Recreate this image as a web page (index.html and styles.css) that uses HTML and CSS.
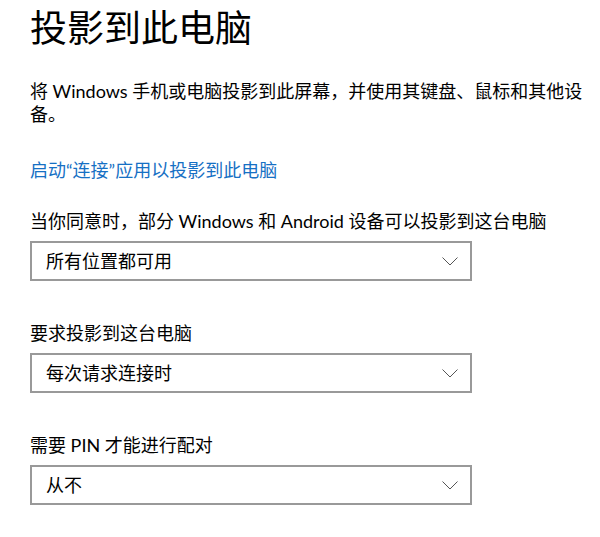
FILE: index.html
```html
<!DOCTYPE html>
<html lang="zh-CN">
<head>
<meta charset="utf-8">
<title>投影到此电脑</title>
<link rel="stylesheet" href="styles.css">
</head>
<body>
<main class="page">
  <h1 class="title">投影到此电脑</h1>
  <p class="desc">将 Windows 手机或电脑投影到此屏幕，并使用其键盘、鼠标和其他设备。</p>
  <a class="link" href="#">启动“连接”应用以投影到此电脑</a>

  <div class="group">
    <div class="label">当你同意时，部分 Windows 和 Android 设备可以投影到这台电脑</div>
    <div class="select">
      <span class="value">所有位置都可用</span>
      <svg class="chev" width="16" height="9" viewBox="0 0 16 9"><polyline points="0.5,0.5 8,8 15.5,0.5" fill="none" stroke="#555" stroke-width="1"/></svg>
    </div>
  </div>

  <div class="group">
    <div class="label">要求投影到这台电脑</div>
    <div class="select">
      <span class="value">每次请求连接时</span>
      <svg class="chev" width="16" height="9" viewBox="0 0 16 9"><polyline points="0.5,0.5 8,8 15.5,0.5" fill="none" stroke="#555" stroke-width="1"/></svg>
    </div>
  </div>

  <div class="group">
    <div class="label">需要 PIN 才能进行配对</div>
    <div class="select">
      <span class="value">从不</span>
      <svg class="chev" width="16" height="9" viewBox="0 0 16 9"><polyline points="0.5,0.5 8,8 15.5,0.5" fill="none" stroke="#555" stroke-width="1"/></svg>
    </div>
  </div>
</main>
</body>
</html>
```

FILE: styles.css
```css
html, body {
  margin: 0;
  padding: 0;
  background: #ffffff;
}

body {
  font-family: "Lato", "Noto Sans CJK SC", sans-serif;
  color: #000000;
  font-size: 18px;
  line-height: 23px;
}

.page {
  display: flex;
  flex-direction: column;
  align-items: flex-start;
  padding: 0 5px 0 30px;
  width: 565px;
}

.title {
  margin: 0;
  font-family: "Noto Sans CJK SC", sans-serif;
  font-size: 37px;
  line-height: 52px;
  font-weight: 400;
  color: #000;
}

.desc {
  margin: 28px 0 0 0;
}

.link {
  margin-top: 33px;
  color: #1670c4;
  text-decoration: none;
}

.group {
  display: flex;
  flex-direction: column;
  gap: 7px;
  margin-top: 40px;
}

.group:first-of-type {
  margin-top: 27px;
}

.label {
  line-height: 25px;
}

.select {
  box-sizing: border-box;
  width: 442px;
  height: 40px;
  border: 2px solid #999999;
  display: flex;
  align-items: center;
  justify-content: space-between;
  padding: 0 12px 0 14px;
}

.chev {
  display: block;
}
```
